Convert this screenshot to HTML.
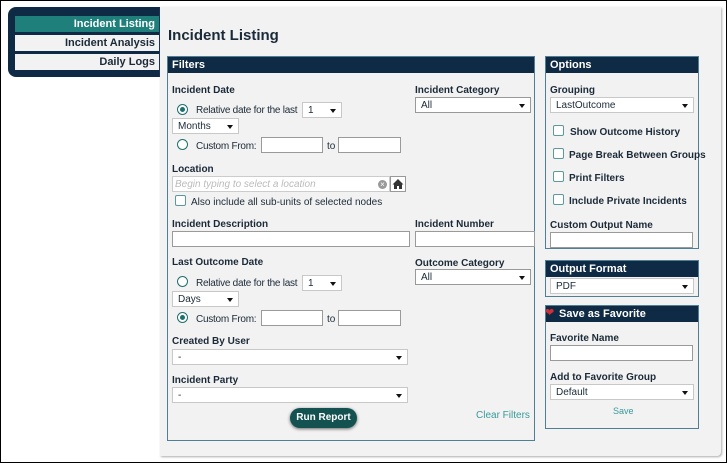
<!DOCTYPE html>
<html><head><meta charset="utf-8"><style>
*{box-sizing:border-box;margin:0;padding:0}
body{width:727px;height:463px;background:#fff;font-family:"Liberation Sans",Arial,sans-serif;position:relative;overflow:hidden;color:#1b2a38}
.frame{position:absolute;left:0;top:0;width:727px;height:463px;border:1px solid #000;z-index:10;pointer-events:none}
.a{position:absolute}
.nav{left:8px;top:7px;width:155px;height:70px;background:#0f2a45;border-radius:8px 0 0 8px}
.nav div{position:absolute;left:7px;width:144px;height:16px;font-size:11px;font-weight:bold;text-align:right;padding-right:4px;line-height:16px;background:#f2f2f2;color:#1b2a38}
.main{left:160px;top:7px;width:561px;height:449px;background:#f2f2f2;box-shadow:1px 1px 2px #aaa;border-radius:0 0 4px 0}
.panel{position:absolute;border:1px solid #4f7f95;background:#f2f2f2}
.hd{position:absolute;left:0;top:0;right:0;height:16px;background:#0f2a45;color:#fff;font-size:11px;font-weight:bold;line-height:16px;padding-left:4px}
.l{position:absolute;font-size:10px;font-weight:bold;color:#1b2a38;margin-top:1px}
.t{position:absolute;font-size:10px;color:#1b2a38;margin-top:1px}
.in{position:absolute;background:#fff;border:1px solid #9a9a9a;height:16px}
.sel{position:absolute;background:#fff;border:1px solid #c8c8c8;height:16px;font-size:10px;line-height:16px;padding-left:5px;color:#1b2a38}
.sel:after{content:"";position:absolute;right:5px;top:6px;border-left:3.5px solid transparent;border-right:3.5px solid transparent;border-top:4px solid #111}
.rad{position:absolute;width:11px;height:11px;border:1.5px solid #1f6f6f;border-radius:50%;background:#fff}
.rad.on:after{content:"";position:absolute;left:1.5px;top:1.5px;width:5px;height:5px;border-radius:50%;background:#1f6f6f}
.cb{position:absolute;width:11px;height:11px;border:1.5px solid #5a9a9a;border-radius:2px;background:#fff}
.sq{letter-spacing:-0.25px}
</style></head><body>
<div class="frame"></div>
<div class="a nav">
<div style="top:9px;background:#1f7f7a;color:#fff">Incident Listing</div>
<div style="top:28px">Incident Analysis</div>
<div style="top:47px">Daily Logs</div>
</div>
<div class="a main"></div>
<div class="a" style="left:168px;top:27px;font-size:15px;font-weight:bold;color:#1b2a38">Incident Listing</div>

<div class="panel" style="left:167px;top:56px;width:368px;height:385px"><div class="hd">Filters</div></div>
<div class="l" style="left:172px;top:84px">Incident Date</div>
<div class="rad on" style="left:177px;top:104px"></div>
<div class="t sq" style="left:196px;top:104px">Relative date for the last</div>
<div class="sel" style="left:302px;top:102px;width:40px">1</div>
<div class="sel" style="left:172px;top:118px;width:67px">Months</div>
<div class="rad" style="left:177px;top:139px"></div>
<div class="t sq" style="left:196px;top:140px">Custom From:</div>
<div class="in" style="left:261px;top:137px;width:62px"></div>
<div class="t" style="left:327px;top:140px">to</div>
<div class="in" style="left:338px;top:137px;width:63px"></div>
<div class="l" style="left:172px;top:163px">Location</div>
<div class="in" style="left:172px;top:176px;width:218px;border-color:#ccc;font-size:10px;font-style:italic;color:#bbb;line-height:15px;padding-left:2px">Begin typing to select a location</div>
<div class="a" style="left:378px;top:180px;width:9px;height:9px;border-radius:50%;background:#999;color:#fff;font-size:8px;line-height:9px;text-align:center">×</div>
<div class="a" style="left:390px;top:176px;width:16px;height:16px;background:#fff;border:1px solid #999"><svg width="14" height="14" viewBox="0 0 14 14"><path d="M7 2L1.5 7.5H3V12H6V9H8V12H11V7.5H12.5Z" fill="#333"/></svg></div>
<div class="cb" style="left:175px;top:195px"></div>
<div class="t" style="left:191px;top:196px">Also include all sub-units of selected nodes</div>
<div class="l" style="left:172px;top:218px">Incident Description</div>
<div class="in" style="left:172px;top:231px;width:238px"></div>
<div class="l" style="left:415px;top:84px">Incident Category</div>
<div class="sel" style="left:415px;top:97px;width:116px;border-color:#999">All</div>
<div class="l" style="left:415px;top:218px">Incident Number</div>
<div class="in" style="left:415px;top:231px;width:120px"></div>
<div class="l" style="left:172px;top:256px">Last Outcome Date</div>
<div class="rad" style="left:177px;top:276px"></div>
<div class="t sq" style="left:196px;top:277px">Relative date for the last</div>
<div class="sel" style="left:302px;top:275px;width:40px">1</div>
<div class="sel" style="left:172px;top:291px;width:67px">Days</div>
<div class="rad on" style="left:177px;top:312px"></div>
<div class="t sq" style="left:196px;top:313px">Custom From:</div>
<div class="in" style="left:261px;top:310px;width:62px"></div>
<div class="t" style="left:327px;top:313px">to</div>
<div class="in" style="left:338px;top:310px;width:63px"></div>
<div class="l" style="left:415px;top:257px">Outcome Category</div>
<div class="sel" style="left:415px;top:269px;width:116px;border-color:#999">All</div>
<div class="l" style="left:172px;top:335px">Created By User</div>
<div class="sel" style="left:172px;top:349px;width:236px">-</div>
<div class="l" style="left:172px;top:374px">Incident Party</div>
<div class="sel" style="left:172px;top:387px;width:236px">-</div>
<div class="a" style="left:290px;top:408px;width:67px;height:20px;border-radius:10px;background:#145252;color:#fff;font-size:10px;font-weight:bold;text-align:center;line-height:20px;box-shadow:0 1px 3px #666">Run Report</div>
<div class="a" style="left:476px;top:410px;font-size:10px;color:#3a9a9a">Clear Filters</div>

<div class="panel" style="left:545px;top:56px;width:154px;height:193px"><div class="hd">Options</div></div>
<div class="l" style="left:550px;top:84px">Grouping</div>
<div class="sel" style="left:550px;top:97px;width:144px">LastOutcome</div>
<div class="cb" style="left:553px;top:125px"></div><div class="l" style="left:570px;top:126px">Show Outcome History</div>
<div class="cb" style="left:553px;top:148px"></div><div class="l" style="left:569px;top:149px">Page Break Between Groups</div>
<div class="cb" style="left:553px;top:171px"></div><div class="l" style="left:569px;top:172px">Print Filters</div>
<div class="cb" style="left:553px;top:194px"></div><div class="l" style="left:569px;top:195px">Include Private Incidents</div>
<div class="l" style="left:550px;top:219px">Custom Output Name</div>
<div class="in" style="left:550px;top:232px;width:143px"></div>

<div class="panel" style="left:545px;top:260px;width:154px;height:37px"><div class="hd">Output Format</div></div>
<div class="sel" style="left:550px;top:278px;width:144px">PDF</div>

<div class="panel" style="left:545px;top:305px;width:154px;height:124px"><div class="hd" style="padding-left:13px">Save as Favorite</div></div>
<div class="a" style="left:545px;top:305px;color:#d0303a;font-size:11px;line-height:16px">❤</div>
<div class="l" style="left:550px;top:332px">Favorite Name</div>
<div class="in" style="left:550px;top:345px;width:143px"></div>
<div class="l" style="left:550px;top:371px">Add to Favorite Group</div>
<div class="sel" style="left:550px;top:384px;width:144px">Default</div>
<div class="a" style="left:613px;top:406px;font-size:9px;color:#3a9a9a">Save</div>
</body></html>
